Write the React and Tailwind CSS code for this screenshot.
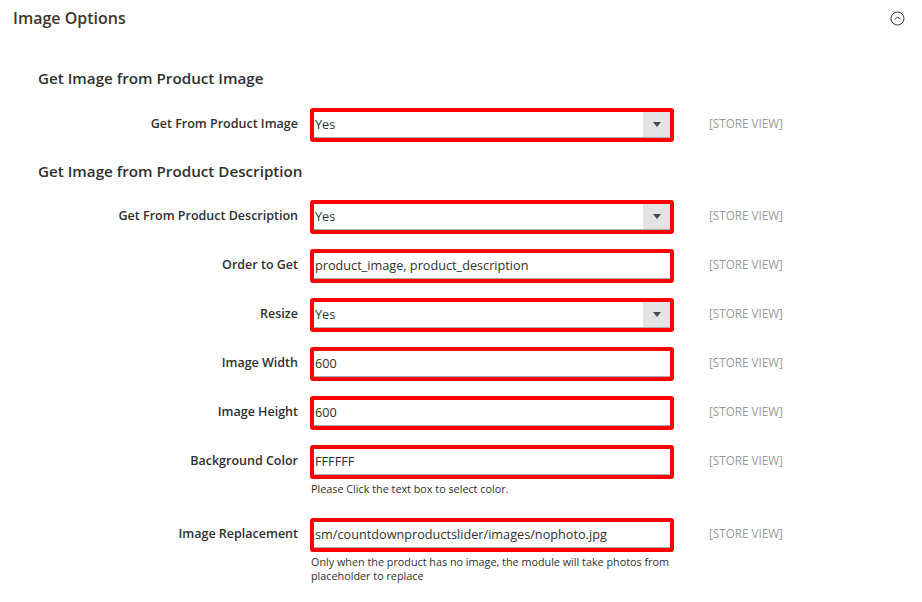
import React from "react";

const font = { fontFamily: '"Open Sans", "Noto Sans", sans-serif' };

function Scope() {
  return <div className="w-[120px] pl-[35px] pt-[7px] text-[11.7px] leading-[16px] text-[#999]">[STORE VIEW]</div>;
}

function Field({ label, value, select, note, mb = "mb-[15px]" }) {
  return (
    <div className={`flex items-start ${mb}`}>
      <div className="w-[298px] shrink-0 pt-[7px] text-right text-[12.5px] font-semibold leading-[18px] text-[#303030]">
        {label}
      </div>
      <div className="ml-[12px] w-[364px] shrink-0">
        <div className="flex h-[34px] rounded-[3px] border-[4px] border-[#ff0000] bg-white">
          <div className="flex flex-1 items-center border-b border-[#adadad] pl-[1px] text-[12.7px] text-[#303030]">
            {value}
          </div>
          {select && (
            <div className="flex w-[27px] items-center justify-center border-b border-[#adadad] bg-[#e3e3e3]">
              <svg width="8" height="5" viewBox="0 0 8 5">
                <path d="M0 0 H8 L4 5 Z" fill="#514943" />
              </svg>
            </div>
          )}
        </div>
        {note && (
          <div className="mt-[3px] pl-[1px] text-[10.8px] leading-[14px] text-[#303030]">{note}</div>
        )}
      </div>
      <Scope />
    </div>
  );
}

export default function App() {
  return (
    <div className="h-[602px] w-[922px] bg-white" style={font}>
      <div className="flex items-center justify-between pl-[13px] pr-[17px] pt-[7px]">
        <div className="text-[16px] font-semibold leading-[22px] text-[#41362f]">Image Options</div>
        <svg width="15" height="15" viewBox="0 0 15 15">
          <circle cx="7.5" cy="7.5" r="6.5" fill="none" stroke="#41362f" strokeWidth="1" />
          <path d="M4.8 8.6 L7.5 5.9 L10.2 8.6" fill="none" stroke="#41362f" strokeWidth="1" />
        </svg>
      </div>
      <div className="mt-[38px] pl-[38px] text-[15.2px] font-semibold leading-[22px] text-[#303030]">
        Get Image from Product Image
      </div>
      <div className="mt-[19px]">
        <Field label="Get From Product Image" value="Yes" select mb="mb-0" />
      </div>
      <div className="mt-[18px] pl-[38px] text-[15.2px] font-semibold leading-[22px] text-[#303030]">
        Get Image from Product Description
      </div>
      <div className="mt-[18px]">
        <Field label="Get From Product Description" value="Yes" select />
        <Field label="Order to Get" value="product_image, product_description" />
        <Field label="Resize" value="Yes" select />
        <Field label="Image Width" value="600" />
        <Field label="Image Height" value="600" />
        <Field
          label="Background Color"
          value="FFFFFF"
          note="Please Click the text box to select color."
          mb="mb-[22px]"
        />
        <Field
          label="Image Replacement"
          value="sm/countdownproductslider/images/nophoto.jpg"
          note={
            <>
              <span className="whitespace-nowrap">
                Only when the product has no image, the module will take photos from
              </span>
              <br />
              placeholder to replace
            </>
          }
        />
      </div>
    </div>
  );
}
